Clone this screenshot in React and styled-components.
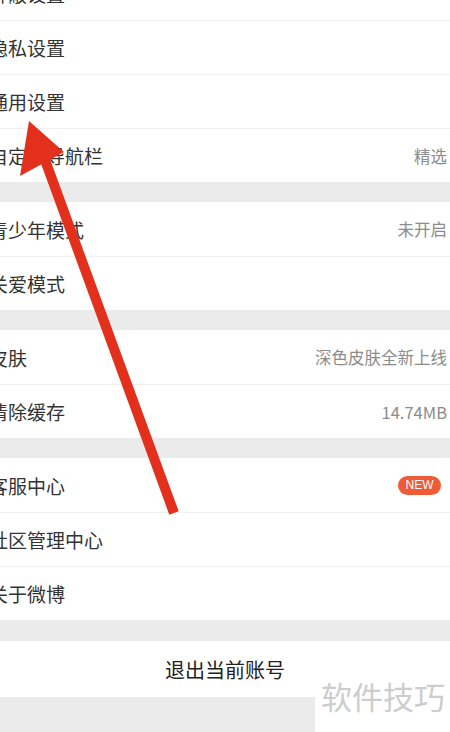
import styled, { createGlobalStyle } from "styled-components";

const GlobalStyle = createGlobalStyle`
  html, body {
    margin: 0;
    padding: 0;
    background: #ebebeb;
    font-family: "Noto Sans CJK SC", "Noto Sans", sans-serif;
  }
`;

const groups = [
  [
    { label: "屏蔽设置" },
    { label: "隐私设置" },
    { label: "通用设置" },
    { label: "自定义导航栏", value: "精选" },
  ],
  [
    { label: "青少年模式", value: "未开启" },
    { label: "关爱模式" },
  ],
  [
    { label: "皮肤", value: "深色皮肤全新上线" },
    { label: "清除缓存", value: "14.74MB" },
  ],
  [
    { label: "客服中心", badge: "NEW" },
    { label: "社区管理中心" },
    { label: "关于微博" },
  ],
];

const App = () => {
  return (
    <>
      <GlobalStyle />
      <Page>
        <List>
          {groups.map((group, gi) => (
            <Group key={gi}>
              {group.map((item) => (
                <Row key={item.label}>
                  <Label>{item.label}</Label>
                  {item.value && <Value>{item.value}</Value>}
                  {item.badge && <Badge>{item.badge}</Badge>}
                </Row>
              ))}
            </Group>
          ))}
          <Logout>退出当前账号</Logout>
        </List>
        <Arrow viewBox="0 0 450 732">
          <line
            x1="174"
            y1="513"
            x2="45"
            y2="160"
            stroke="#e3301c"
            strokeWidth="10"
          />
          <polygon points="29,121 20,176 64,152" fill="#e3301c" />
        </Arrow>
        <Watermark>
          <span>软件技巧</span>
        </Watermark>
      </Page>
    </>
  );
};
export default App;

const Page = styled.div`
  position: relative;
  width: 450px;
  height: 732px;
  overflow: hidden;
  background: #ebebeb;
`;

const List = styled.div`
  display: flex;
  flex-direction: column;
  gap: 20px;
  margin-top: -34px;
`;

const Group = styled.div`
  display: flex;
  flex-direction: column;
  background: #fff;
`;

const Row = styled.div`
  box-sizing: border-box;
  height: 54px;
  display: flex;
  align-items: center;
  justify-content: space-between;
  padding-right: 3px;
  & + & {
    border-top: 1px solid #f0f0f0;
  }
`;

const Label = styled.div`
  margin-left: -11px;
  font-size: 19px;
  color: #333;
  white-space: nowrap;
`;

const Value = styled.div`
  font-size: 16.5px;
  color: #8c8c8c;
  white-space: nowrap;
`;

const Badge = styled.div`
  width: 43px;
  height: 19px;
  margin-right: 6px;
  border-radius: 10px;
  background: #ee5b37;
  color: #fff;
  font-family: "Liberation Sans", Arial, sans-serif;
  font-size: 12px;
  display: flex;
  align-items: center;
  justify-content: center;
`;

const Logout = styled.div`
  height: 56px;
  margin-top: 1px;
  display: flex;
  align-items: center;
  justify-content: center;
  background: #fff;
  font-size: 20px;
  color: #222;
`;

const Arrow = styled.svg`
  position: absolute;
  left: 0;
  top: 0;
  width: 450px;
  height: 732px;
  pointer-events: none;
`;

const Watermark = styled.div`
  position: absolute;
  left: 315px;
  top: 697px;
  width: 135px;
  height: 35px;
  background: #fff;
  span {
    position: absolute;
    left: 6px;
    top: -21px;
    font-size: 31px;
    line-height: 40px;
    color: #cdcdcd;
    white-space: nowrap;
  }
`;
